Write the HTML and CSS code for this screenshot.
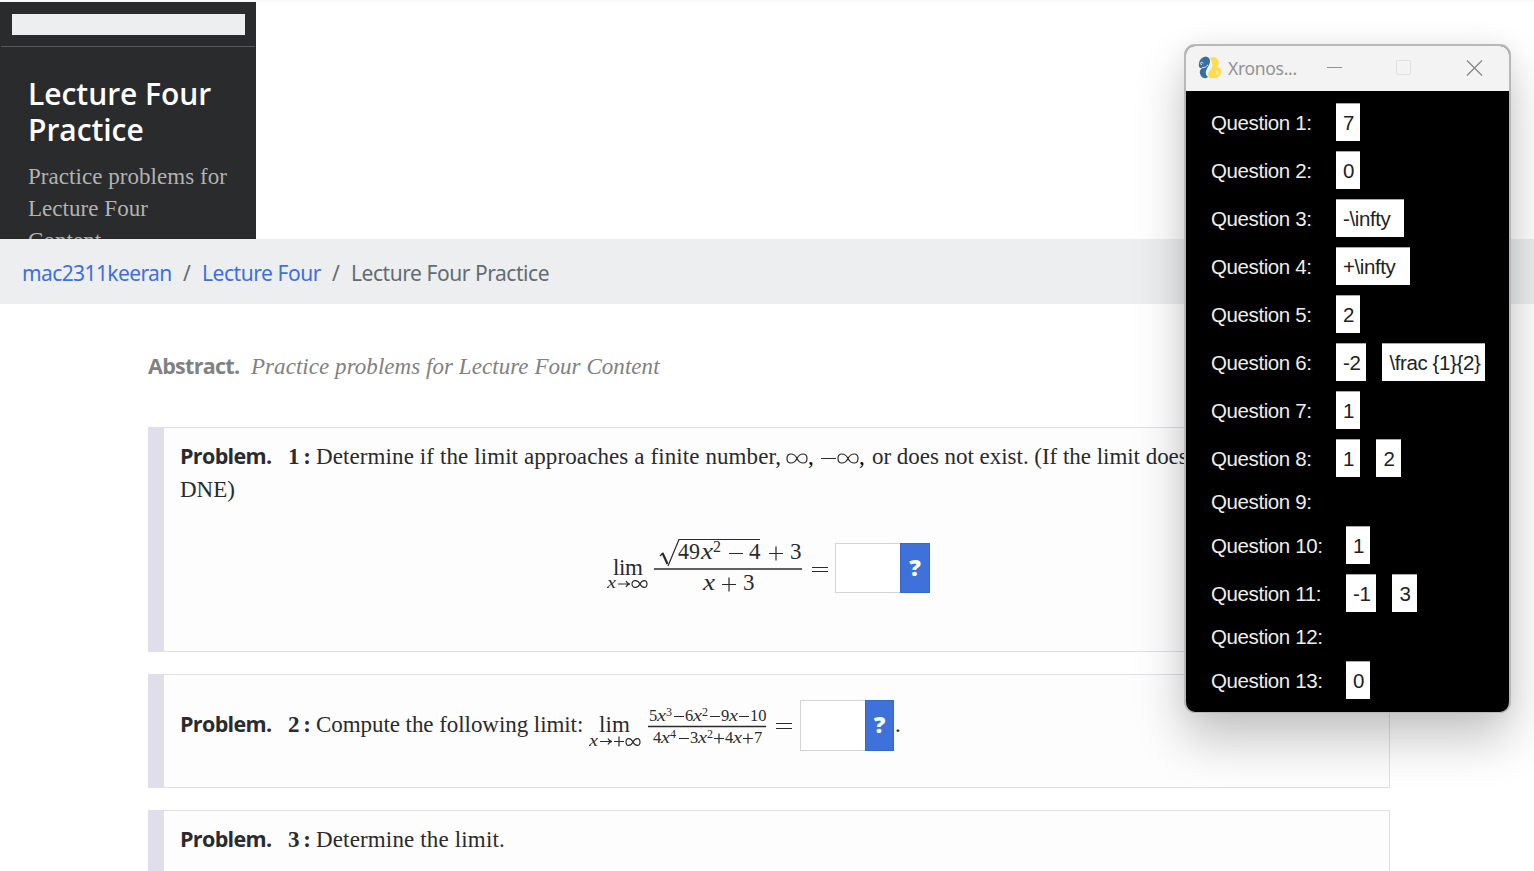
FILE: index.html
```html
<!DOCTYPE html>
<html lang="en">
<head>
<meta charset="utf-8">
<title>Lecture Four Practice</title>
<link rel="stylesheet" href="styles.css">
</head>
<body>
<aside class="sidebar">
  <div class="progress-wrap"><div class="progress"></div></div>
  <div class="course">
    <h1>Lecture Four<br>Practice</h1>
    <p>Practice problems for<br>Lecture Four<br>Content</p>
  </div>
</aside>
<nav class="breadcrumb"><a class="c1">mac2311keeran</a><i>/</i><a class="c2">Lecture Four</a><i>/</i><span>Lecture Four Practice</span></nav>
<main>
  <div class="abstract"><b>Abstract.</b><em>Practice problems for Lecture Four Content</em></div>
  <section class="problem p1">
    <div class="line"><b class="label">Problem.</b><b class="num">1 :</b><span class="t1">Determine if the limit approaches a finite number,</span><svg class="inf" width="84" height="32"><path class="curve" d="M12 17.500c-3-6-10-6-10 0s7 6 10 0s10-6 10 0s-7 6-10 0M63 17.500c-3-6-10-6-10 0s7 6 10 0s10-6 10 0s-7 6-10 0M36 17.500h15"/><text x="23" y="23">,</text><text x="74" y="23">,</text></svg><span class="t2">or does not exist. (If the limit does</span></div>
    <div class="line dne">DNE)</div>
    <div class="display">
      <svg class="math" width="228" height="70">
        <text x="6" y="45" textLength="30">lim</text>
        <text class="it sm" x="0" y="58" textLength="9" lengthAdjust="spacingAndGlyphs">x</text>
        <path class="thin" d="M11 54h12m-4-3q1 2.500 4 3q-3 .5-4 3"/>
        <path class="thin" d="M33 54c-2-4-8-5-8 0s6 4 8 0s7-5 7 0s-5 4-7 0"/>
        <path class="thin" d="M53 26l3-3"/><path class="thick" d="M55.500 23l5 11"/><path class="thin" d="M61 36L72 9.500"/><path class="thin" d="M71.500 9.500H153"/>
        <text x="71" y="29" textLength="22" lengthAdjust="spacingAndGlyphs">49</text>
        <text class="it" x="94" y="29" textLength="12" lengthAdjust="spacingAndGlyphs">x</text>
        <text class="sup" x="106" y="22">2</text>
        <path class="thin" d="M122 23.500h14M162 23.500h14M169 16.500v14"/>
        <text x="142" y="29" textLength="12">4</text><text x="183" y="29" textLength="11">3</text>
        <path class="rule" d="M47 39h148"/>
        <text class="it" x="96" y="60" textLength="12" lengthAdjust="spacingAndGlyphs">x</text>
        <path class="thin" d="M115 54.500h14M122 47.500v14M205 37.500h16M205 41.500h16"/>
        <text x="136" y="60">3</text>
      </svg>
      <div class="answer"><div class="blank"></div><div class="help">?</div></div>
    </div>
  </section>
  <section class="problem p2">
    <div class="line"><b class="label">Problem.</b><b class="num">2 :</b><span class="t3">Compute the following limit:</span><svg class="math" width="210" height="50">
        <text x="10" y="32" textLength="31">lim</text>
        <text class="it sm" x="0" y="46" textLength="9" lengthAdjust="spacingAndGlyphs">x</text>
        <path class="thin" d="M11 41.500h12m-4-3q1 2.500 4 3q-3 .5-4 3M25 41.500h10M30 36.500v10M44 42c-2-4-7-5-7 0s5 4 7 0s7-5 7 0s-5 4-7 0"/>
        <path class="rule" d="M59 26.500h118"/>
        <text class="fr" x="60" y="21">5</text><text class="it fr" x="68" y="21" textLength="9" lengthAdjust="spacingAndGlyphs">x</text><text class="fs" x="77" y="16">3</text>
        <text class="fr" x="96" y="21">6</text><text class="it fr" x="104" y="21" textLength="9" lengthAdjust="spacingAndGlyphs">x</text><text class="fs" x="113" y="16">2</text>
        <text class="fr" x="132" y="21">9</text><text class="it fr" x="140" y="21" textLength="9" lengthAdjust="spacingAndGlyphs">x</text><text class="fr" x="161" y="21">10</text>
        <path class="thin" d="M85 16.500h10M121 16.500h10M150 16.500h10"/>
        <text class="fr" x="64" y="43">4</text><text class="it fr" x="72" y="43" textLength="9" lengthAdjust="spacingAndGlyphs">x</text><text class="fs" x="81" y="38">4</text>
        <text class="fr" x="101" y="43">3</text><text class="it fr" x="109" y="43" textLength="9" lengthAdjust="spacingAndGlyphs">x</text><text class="fs" x="118" y="38">2</text>
        <text class="fr" x="136" y="43">4</text><text class="it fr" x="144" y="43" textLength="9" lengthAdjust="spacingAndGlyphs">x</text><text class="fr" x="165" y="43">7</text>
        <path class="thin" d="M90 38.500h10M125 38.500h10M130 33.500v10M154 38.500h10M159 33.500v10M187 23.500h16M187 28.500h16"/>
      </svg><div class="answer"><div class="blank"></div><div class="help">?</div></div><span class="dot">.</span></div>
  </section>
  <section class="problem p3">
    <div class="line"><b class="label">Problem.</b><b class="num">3 :</b><span class="t4">Determine the limit.</span></div>
  </section>
</main>
<div class="window">
  <header class="titlebar">
    <svg class="logo" width="24" height="24" viewBox="0 0 24 24"><path fill="#376f9f" d="M4 2Q8-1 11 2Q13 5 11 9Q9 12 8 15Q7 19 10 21Q6 24 3 20Q0 15 4 12Q0 12 1 8Q1 4 4 2z"/><path fill="#ffdc52" d="M12 2Q17-1 20 4Q22 8 19 11Q24 12 23 17Q21 23 15 22Q11 23 10 19Q10 16 13 13Q16 8 12 2z"/><path fill="none" stroke="#f3f3f3" stroke-width=".9" d="M5 7.500a1.200 1.200 0 1 0-1 1.200M4 11.800q4 0 6-3M20 15.500a1.200 1.200 0 1 0 .8 1.200"/></svg>
    <span class="wtitle">Xronos...</span>
    <svg class="controls" width="160" height="20"><path d="M0 9.500h15" stroke="#929292"/><rect x="69.500" y="2.500" width="14" height="14" rx="1.500" fill="none" stroke="#dedede"/><path d="M140 2.500l15 15M155 2.500l-15 15" stroke="#888" stroke-width="1.300"/></svg>
  </header>
  <div class="rows">
    <div class="row"><label>Question 1:</label><span>7</span></div>
    <div class="row"><label>Question 2:</label><span>0</span></div>
    <div class="row"><label>Question 3:</label><span class="w67">-\infty</span></div>
    <div class="row"><label>Question 4:</label><span class="w74">+\infty</span></div>
    <div class="row"><label>Question 5:</label><span>2</span></div>
    <div class="row"><label>Question 6:</label><span class="w30">-2</span><span class="w102">\frac {1}{2}</span></div>
    <div class="row"><label>Question 7:</label><span>1</span></div>
    <div class="row"><label>Question 8:</label><span>1</span><span>2</span></div>
    <div class="row empty"><label>Question 9:</label></div>
    <div class="row wide"><label>Question 10:</label><span>1</span></div>
    <div class="row wide"><label>Question 11:</label><span class="w30">-1</span><span>3</span></div>
    <div class="row wide empty"><label>Question 12:</label></div>
    <div class="row wide"><label>Question 13:</label><span>0</span></div>
  </div>
</div>
</body>
</html>
```
FILE: styles.css
```css
* { box-sizing: border-box; }
body { margin: 0; height: 871px; overflow: hidden; position: relative; background: #fff; border-top: 2px solid #f8f9fa; color: #292b2c; font: 23px/32px "Liberation Serif", serif; }
.sidebar { width: 256px; height: 237px; overflow: hidden; background: #292b2c; }
.progress-wrap { height: 45px; padding: 12px 10px 0 11px; border-bottom: 1px solid #55595c; margin: 0 1px; }
.progress { height: 21px; background: #eceeef; }
.course { padding: 29px 0 0 28px; white-space: nowrap; }
h1 { margin: 0 0 13px; color: #fff; font: 600 30px/36px "Open Sans", sans-serif; letter-spacing: -.05px; }
.course p { margin: 0; color: #b2b2b2; letter-spacing: .05px; }
.breadcrumb { height: 65px; display: flex; align-items: center; padding: 3px 0 0 22px; background: #eceeef; color: #636c72; font: 21px/32px "Noto Sans", sans-serif; white-space: nowrap; }
.breadcrumb a { color: #3f70d9; }
.breadcrumb i { width: 30px; text-align: center; font-style: normal; }
.c1 { width: 150px; letter-spacing: -.6px; }
.c2 { width: 119px; letter-spacing: -.45px; }
.breadcrumb span { letter-spacing: -.45px; }
main { padding: 47px 144px 0 148px; }
.abstract { height: 76px; display: flex; color: #818181; white-space: nowrap; }
.abstract b { width: 103px; font: 700 21.500px/30px "Open Sans", sans-serif; letter-spacing: -.7px; }
.abstract em { letter-spacing: .05px; }
.problem { border: 1px solid #dfdeea; border-left: 16px solid #dfdeea; background: #fdfdfd; padding: 13px 0 0 16px; margin-bottom: 22px; }
.p1 { height: 225px; }
.p2 { height: 114px; padding-top: 25px; }
.p3 { height: 61px; margin-bottom: 0; border-bottom: 0; }
.line { height: 32px; display: flex; white-space: nowrap; }
.label { width: 108px; font: 700 21.500px/30px "Open Sans", sans-serif; letter-spacing: -.65px; }
.num { width: 28px; word-spacing: -2px; }
.t1 { width: 469px; letter-spacing: .1px; }
.t2 { letter-spacing: -.03px; }
.t3 { width: 273px; letter-spacing: -.06px; }
.t4 { letter-spacing: .15px; }
.inf { width: 87px; flex: none; }
.curve, .thin, .thick, .rule { fill: none; stroke: #292b2c; stroke-width: 1.200; }
.thick { stroke-width: 2.200; }
.rule { stroke-width: 1.500; }
.dne { margin-top: 1px; }
.display { display: flex; margin: 31px 0 0 427px; }
.display .answer { margin-top: 6px; }
.display .math { margin-top: -7px; }
.math { flex: none; font-size: 23px; fill: #292b2c; }
.it { font-style: italic; }
.sm { font-size: 17px; }
.sup { font-size: 16px; }
.fr { font-size: 16.500px; }
.fs { font-size: 12px; }
.answer { display: flex; width: 95px; height: 50px; flex: none; }
.blank { width: 65px; border: 1px solid #d4d4d4; border-right: 0; background: #fff; }
.help { width: 30px; background: #3e72da; border: 1px solid #3468cf; color: #fff; text-align: center; font: 800 23px/46px "Open Sans", sans-serif; }
.p2 .line { height: 50px; }
.p2 .line > * { flex: none; }
.p2 .label, .p2 .num, .p2 .t3, .p2 .dot { margin-top: 9px; }
.p2 .math { margin-right: 1px; }
.p2 .answer { width: 94px; height: 51px; }
.p2 .help { width: 29px; }
.dot { margin-left: 1px; }
.window { position: absolute; left: 1184px; top: 42px; width: 327px; height: 669px; border: 2px solid #b8b8b8; border-bottom-width: 1px; border-radius: 11px; overflow: hidden; background: #000; box-shadow: 0 26px 50px rgba(0,0,0,.23), 0 0 24px rgba(0,0,0,.05); }
.titlebar { height: 45px; display: flex; align-items: center; padding: 0 0 2px 12px; background: #f3f3f3; }
.logo { margin-top: 1px; }
.wtitle { width: 105px; padding-left: 6px; color: #929292; font: 17.500px/24px "Noto Sans", sans-serif; letter-spacing: -.3px; }
.rows { padding: 7px 0 0 25px; font: 20.500px/38px "Liberation Sans", sans-serif; }
.row { height: 48px; display: flex; align-items: center; color: #eee; }
.row.empty { height: 39px; }
.row label { width: 125px; flex: none; letter-spacing: -.4px; padding-top: 1px; white-space: nowrap; }
.row.wide label { width: 135px; }
.row span { width: 24.400px; height: 38px; flex: none; padding: 0 0 0 7px; margin-right: 16px; border-top: 1px solid #aaa; background: #fff; color: #222; white-space: nowrap; letter-spacing: -.4px; }
.row .w67 { width: 68px; }
.row .w74 { width: 74px; }
.row .w30 { width: 30.400px; }
.row .w102 { width: 102.500px; }
```
